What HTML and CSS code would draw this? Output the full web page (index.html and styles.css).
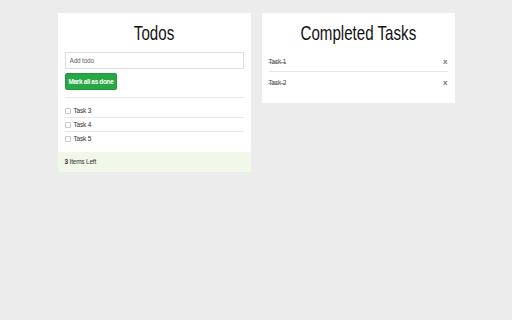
FILE: index.html
```html
<!DOCTYPE html>
<html lang="en">
<head>
  <meta charset="UTF-8">
  <title>Todos</title>
  <link rel="stylesheet" href="styles.css">
</head>
<body>

  <div class="board">

    <div class="card">
      <div class="card-body">
        <h1><span>Todos</span></h1>
        <input class="add-todo" type="text" placeholder="Add todo">
        <button class="done-all">Mark all as done</button>
        <hr>
        <ul class="todo-list">
          <li><input type="checkbox"> <span>Task 3</span></li>
          <li><input type="checkbox"> <span>Task 4</span></li>
          <li><input type="checkbox"> <span>Task 5</span></li>
        </ul>
      </div>
      <div class="card-footer"><strong>3</strong> Items Left</div>
    </div>

    <div class="card">
      <div class="card-body completed">
        <h1><span>Completed Tasks</span></h1>
        <ul class="done-list">
          <li><span class="done">Task 1</span> <button class="remove">x</button></li>
          <li><span class="done">Task 2</span> <button class="remove">x</button></li>
        </ul>
      </div>
    </div>

  </div>

</body>
</html>
```

FILE: styles.css
```css
body {
  margin: 0;
  background-color: #ececec;
  font-family: 'Liberation Sans', Arial, sans-serif;
  color: #222;
}

.board {
  display: flex;
  justify-content: center;
  align-items: flex-start;
  gap: 11px;
  padding-top: 13px;
}

.card {
  width: 193px;
  background-color: #fff;
}

.card-body {
  padding: 7px;
}

h1 {
  font-size: 21px;
  font-weight: normal;
  text-align: center;
  line-height: 22px;
  margin: 2px 0 8px 0;
  color: #111;
}

/* the heading font is a condensed one */
h1 span {
  display: inline-block;
  transform: scaleX(0.72);
}

.add-todo {
  display: block;
  box-sizing: border-box;
  width: 100%;
  height: 17px;
  border: 1px solid #ddd;
  padding: 0 4px;
  font-family: inherit;
  font-size: 6.5px;
  letter-spacing: -0.2px;
  outline: none;
}

.add-todo::placeholder {
  color: #666;
}

.done-all {
  display: block;
  margin-top: 4px;
  height: 17px;
  padding: 0 3px;
  background-color: #28a745;
  border: 1px solid #23963d;
  border-radius: 2px;
  color: #fff;
  font-family: inherit;
  font-size: 6.5px;
  font-weight: bold;
  letter-spacing: -0.35px;
}

hr {
  border: none;
  border-top: 1px solid #e8e8e8;
  margin: 7px 0 0 0;
}

ul {
  list-style: none;
  margin: 0;
  padding: 0;
}

.todo-list {
  padding-top: 6px;
}

.todo-list li {
  display: flex;
  align-items: center;
  height: 13px;
  font-size: 6.5px;
  letter-spacing: -0.2px;
  color: #333;
}

.todo-list li + li {
  border-top: 1px solid #e6e6e6;
}

.todo-list input {
  appearance: none;
  box-sizing: border-box;
  width: 6px;
  height: 6px;
  margin: 0 3px 0 0;
  border: 1px solid #c8c8c8;
  border-radius: 1px;
  background-color: #fff;
}

.card-footer {
  height: 20px;
  line-height: 20px;
  padding: 0 7px;
  background-color: #f1f8e9;
  font-size: 6.5px;
  letter-spacing: -0.2px;
  color: #333;
}

.completed h1 {
  margin-bottom: 7px;
}

.completed {
  padding-bottom: 11px;
}

.done-list li {
  display: flex;
  justify-content: space-between;
  align-items: center;
  height: 20px;
  font-size: 6.5px;
  letter-spacing: -0.2px;
  color: #444;
}

.done-list li + li {
  border-top: 1px solid #e6e6e6;
}

.done {
  text-decoration: line-through;
  text-decoration-color: #999;
}

.remove {
  background: none;
  border: none;
  padding: 0;
  font-family: inherit;
  font-size: 8px;
  font-weight: bold;
  color: #777;
}
```
